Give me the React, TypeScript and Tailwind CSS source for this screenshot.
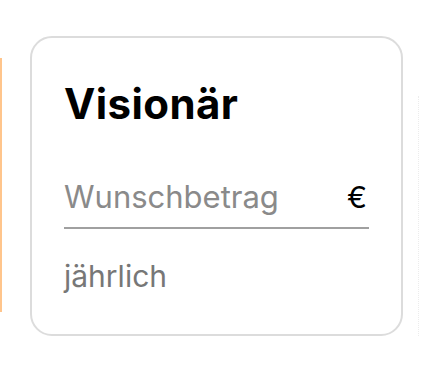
export default function App() {
  return (
    <div
      className="w-[426px] h-[372px] bg-white overflow-hidden flex items-start pt-[36px]"
      style={{ fontFamily: 'Inter, "Noto Sans", sans-serif' }}
    >
      <div className="w-[2px] h-[254px] mt-[22px] bg-[#ffc58c] shrink-0" />
      <div className="ml-[28px] w-[373px] h-[300px] shrink-0 rounded-[22px] border-2 border-[#dcdcdc] px-[32px] pt-[42px]">
        <h2 className="text-[42px] leading-[48px] font-bold text-black tracking-[0.4px]">Visionär</h2>
        <div className="mt-[51px] flex items-center justify-between border-b-2 border-[#a0a0a0] pb-[12px]">
          <span className="text-[31px] leading-[36px] text-[#8a8a8a]">Wunschbetrag</span>
          <span className="text-[30px] leading-[36px] text-black pr-[2px]">€</span>
        </div>
        <div className="mt-[29px] text-[30px] leading-[36px] text-[#777777]">jährlich</div>
      </div>
      <div className="ml-[15px] mt-[60px] h-[240px] border-l border-dotted border-[#ececec]" />
    </div>
  );
}
